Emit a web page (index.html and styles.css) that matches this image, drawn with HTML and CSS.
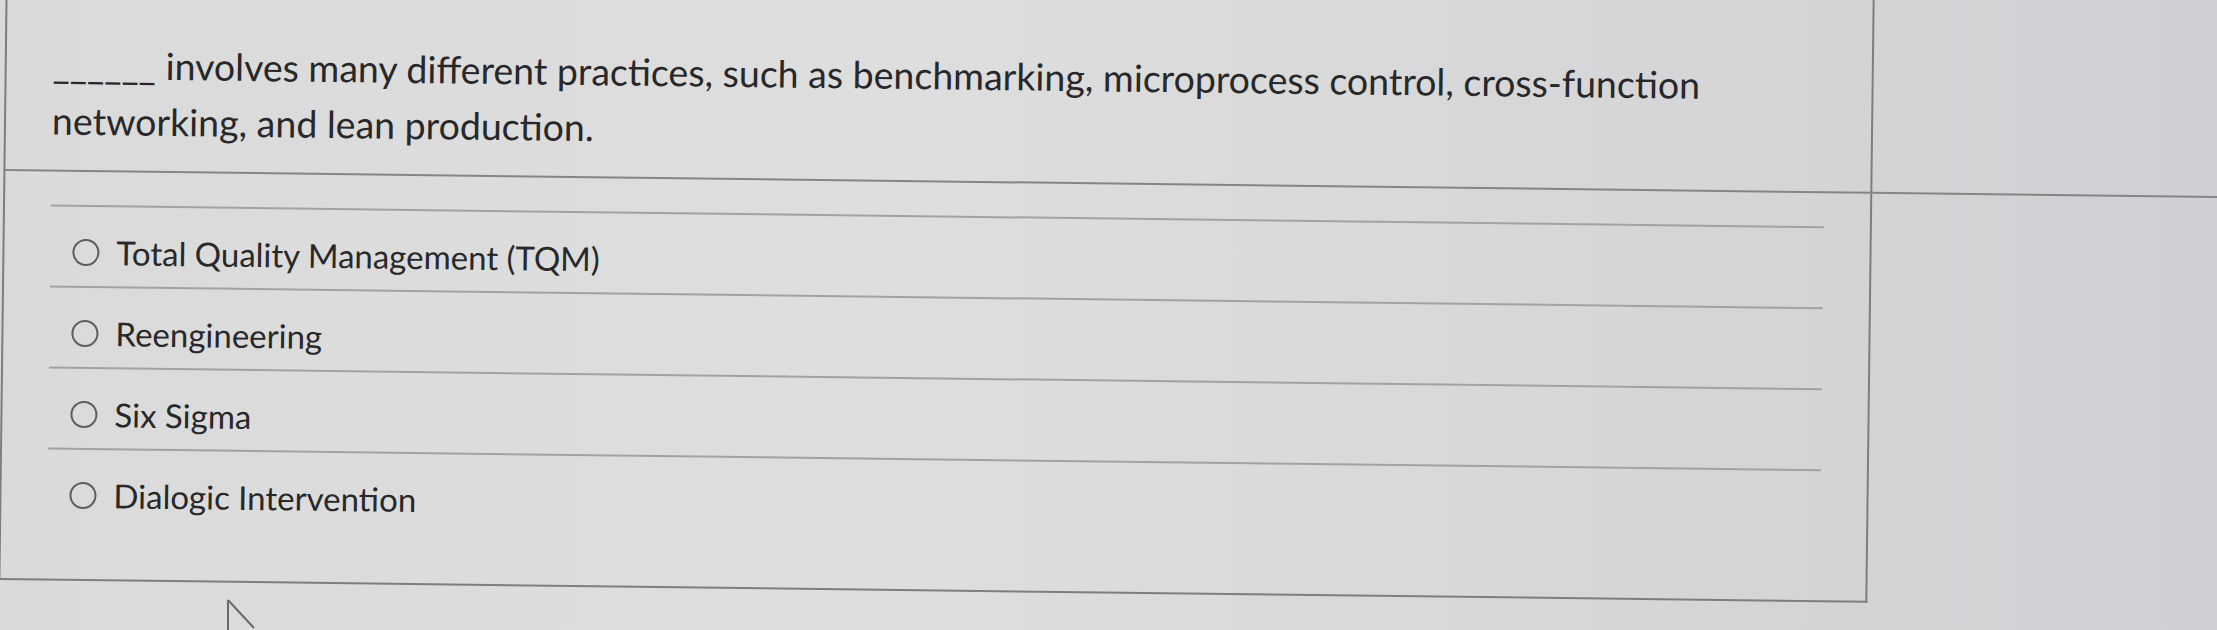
FILE: index.html
```html
<!DOCTYPE html>
<html lang="en">
<head>
<meta charset="utf-8">
<title>Question</title>
<link rel="stylesheet" href="styles.css">
</head>
<body>
<div class="page">
  <div class="question">
    <p class="qtext">______ involves many different practices, such as benchmarking, microprocess control, cross-function networking, and lean production.</p>
  </div>
  <div class="side-top"></div>
  <div class="answers">
    <ul class="options">
      <li class="option"><span class="radio"></span><span class="label">Total Quality Management (TQM)</span></li>
      <li class="option"><span class="radio"></span><span class="label">Reengineering</span></li>
      <li class="option"><span class="radio"></span><span class="label">Six Sigma</span></li>
      <li class="option"><span class="radio"></span><span class="label">Dialogic Intervention</span></li>
    </ul>
  </div>
  <div class="side-bottom"></div>
</div>
<svg class="cursor" width="40" height="40" viewBox="0 0 40 40"><path d="M2 2 L2 36 M2 2 L28 30" fill="none" stroke="#6a6a6a" stroke-width="2"/></svg>
</body>
</html>
```
FILE: styles.css
```css
html, body {
  margin: 0;
  padding: 0;
  width: 2217px;
  height: 630px;
  overflow: hidden;
}
body {
  background: linear-gradient(90deg, #dadada 0%, #dedede 40%, #d7d7d9 70%, #d0d0d4 100%);
  font-family: "Lato", "Liberation Sans", sans-serif;
  color: #28282a;
  position: relative;
}
.page {
  display: grid;
  grid-template-columns: 1869px 420px;
  grid-template-rows: 211px 409px;
  margin: -40px 0 0 6px;
  transform: rotate(0.7deg);
  transform-origin: 0 0;
}
.question {
  border-left: 2px solid #7e7e80;
  border-right: 2px solid #7e7e80;
  border-bottom: 2px solid #858587;
  padding: 76px 0 0 46px;
}
.qtext {
  margin: 0;
  font-size: 37.5px;
  line-height: 56px;
  max-width: 1700px;
}
.side-top {
  border-bottom: 2px solid #858587;
}
.answers {
  border-left: 2px solid #7e7e80;
  border-right: 2px solid #7e7e80;
  border-bottom: 2px solid #7e7e80;
  padding: 33px 46px 0 46px;
}
.options {
  list-style: none;
  margin: 0;
  padding: 0;
}
.option {
  display: flex;
  align-items: center;
  gap: 17px;
  height: 81px;
  box-sizing: border-box;
  padding: 26px 0 15px 22px;
  border-top: 2px solid #a2a2a4;
  font-size: 33px;
  line-height: 40px;
}
.radio {
  width: 23px;
  height: 23px;
  border: 2px solid #5e5e60;
  border-radius: 50%;
  flex: none;
}
.cursor {
  position: absolute;
  left: 226px;
  top: 598px;
}
```
